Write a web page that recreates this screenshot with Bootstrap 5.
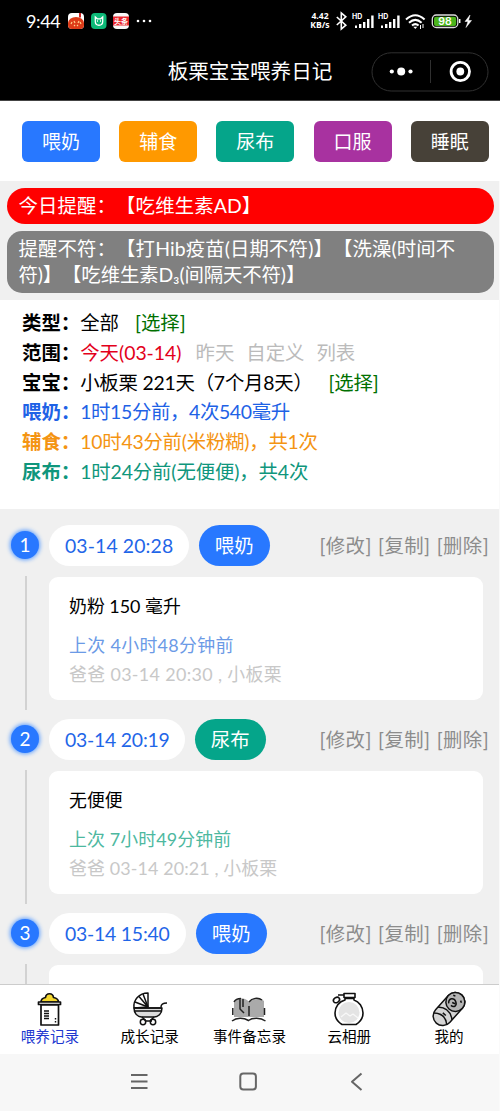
<!DOCTYPE html>
<html lang="zh-CN">
<head>
<meta charset="utf-8">
<meta name="viewport" content="width=device-width, initial-scale=1">
<title>板栗宝宝喂养日记</title>
<link href="https://cdn.jsdelivr.net/npm/bootstrap@5.3.0/dist/css/bootstrap.min.css" rel="stylesheet">
<style>
  :root { --blue:#2878ff; --orange:#ff9900; --green:#05a58a; --purple:#a832a0; --dark:#474138; }
  body { height:1112px; overflow:hidden; background:#fff; color:#000; font-family:Lato,"Noto Sans CJK SC",sans-serif; font-size:19.4px; line-height:1; text-spacing-trim:space-all; white-space:nowrap; font-weight:400; }
  svg { display:block; flex:none; }
  .status { height:42px; padding:0 26px 0 26px; }
  .clock { font-size:18px; width:42px; letter-spacing:-.4px; }
  .speed { font-family:"Open Sans",sans-serif; font-size:8.6px; line-height:9px; font-weight:700; width:24px; }
  .speed span { display:block; height:9px; }
  .topbar { height:59px; position:relative; border-bottom:1px solid #444; }
  .app-title { font-size:20.6px; }
  .capsule { position:absolute; right:11px; top:10px; }
  .inner { border-right:1px solid #fafafa; }
  .quick { height:80px; padding:20px 11px 0 22px; gap:19.2px; }
  .quick .btn { width:78px; height:41px; padding:0; border:0; border-radius:6px; color:#fff; font-size:19px; line-height:40px; }
  .c-blue { background:var(--blue); } .c-orange { background:var(--orange); } .c-green { background:var(--green); }
  .c-purple { background:var(--purple); } .c-dark { background:var(--dark); }
  .t-blue { color:#1e62e6; } .t-orange { color:#f49412; } .t-green { color:#0f967c; } .t-choose { color:#007000; } .t-red { color:#e3001b; } .t-mute { color:#bbb; }
  .notices { background:#f0f0f0; height:119px; padding:7px 5px 0 7px; gap:7.5px; }
  .notice { color:#fff; line-height:26px; padding:0 11.5px; letter-spacing:.13px; }
  .notice-red { background:#f00; height:35.5px; border-radius:18px; padding-top:5px; }
  .notice-gray { background:#808080; height:61.5px; border-radius:15px; padding-top:4.5px; }
  .tight-1 { letter-spacing:-.12px; } .tight-2 { letter-spacing:-.22px; } .tight-3 { letter-spacing:-.35px; }
  .loose-1 { letter-spacing:.12px; } .loose-2 { letter-spacing:.35px; }
  .info { height:209px; padding:8.3px 22px 0; }
  .info div { height:29.65px; line-height:29.65px; }
  .info b { font-weight:700; letter-spacing:0; }
  .feed { background:#f0f0f0; height:475px; overflow:hidden; padding:16px 10px 0 0; }
  .entry { height:194px; }
  .rail { width:49px; padding-left:1px; }
  .num { width:28px; height:28px; margin-top:6px; border-radius:50%; background:var(--blue); color:#fff; line-height:28px; font-size:19px; box-shadow:0 0 4px 1px #5b9dff; }
  .stem { width:2px; height:134px; margin:17px 0 0 1px; background:#d2d2d2; }
  .pill { height:41px; line-height:41px; border-radius:21px; }
  .when { background:#fff; color:#1f66e8; padding-left:16px; }
  .tag { width:70.5px; color:#fff; margin-left:10px; text-align:center; }
  .acts { color:#8c8c8c; line-height:41px; letter-spacing:.42px; word-spacing:.9px; }
  .note-card { width:434px; height:123px; margin-top:10.5px; border-radius:9px; background:#fff; padding:15.5px 20px 0; font-size:17.9px; }
  .note-card div { height:29px; line-height:29px; }
  .note-card .what { height:38.5px; }
  .note-card .who { color:#c8c8c8; }
  .tabs { height:70px; border-top:1px solid #ccc; padding-top:5px; font-size:14.6px; }
  .tabs a { width:100px; color:#000; text-decoration:none; line-height:18px; }
  .tabs a.on { color:#2037d0; }
  .sysbar { height:57px; background:#f7f7f7; }
</style>
</head>
<body class="d-flex flex-column">
<header class="bg-black text-white">
  <div class="status d-flex align-items-center">
    <span class="clock">9:44</span>
    <svg width="84" height="18" viewBox="0 0 84 18">
      <rect x="0" y="1" width="16" height="16" rx="4" fill="#fff"/><path d="M11 1h2v5l-1-1-1 1z" fill="#c22"/><path d="M0 11a8 6 0 0 1 16 0v2a4 4 0 0 1-4 4H4a4 4 0 0 1-4-4z" fill="#dd3b18"/><path d="M3 12l1-2M6 9l1 2M11 9l-1 2M13 12l-1-2M6 14l1-1M10 14l-1-1" stroke="#ffd08a" stroke-width="1.2"/>
      <rect x="23" y="1" width="15.500" height="16" rx="4" fill="#0cb977"/><path d="M27.300 5v4.500c0 5 7.400 5 7.400 0V5l-2 1.800h-3.400zM29 9h1M32 9h1" fill="none" stroke="#fff" stroke-width="1.300"/>
      <rect x="45" y="1" width="16" height="16" rx="4" fill="#f8f8f8"/><rect x="45" y="4.500" width="16" height="9" fill="#e9252c"/>
      <text x="53" y="12" text-anchor="middle" font-size="7" font-weight="700" fill="#fff" font-family="Noto Sans CJK SC">头条</text>
      <g fill="#fff"><circle cx="70" cy="9" r="1.300"/><circle cx="76" cy="9" r="1.300"/><circle cx="82" cy="9" r="1.300"/></g>
    </svg>
    <div class="speed ms-auto text-center"><span>4.42</span><span>KB/s</span></div>
    <svg class="ms-1" width="138" height="20" viewBox="0 0 138 20" fill="none" stroke="#fff">
      <path d="M.8 6l9 8.200L5.300 18V2l4.500 3.800L.8 14" stroke-width="1.600"/>
      <g id="sig" fill="#fff" stroke="none"><rect x="19" y="14.500" width="2" height="2.500"/><rect x="23" y="13" width="2.400" height="4"/><rect x="27" y="11" width="2.400" height="6"/><rect x="31" y="8" width="2.400" height="9"/><rect x="35.200" y="4.500" width="2.400" height="12.500"/><text x="16" y="8" font-size="7" font-weight="700" font-family="Inter">HD</text></g>
      <use href="#sig" x="26"/>
      <path d="M70 8.500q9.300-8.500 18.600 0M73 11.700q6.300-5.700 12.600 0M76 14.600q3.300-2.900 6.600 0" stroke-width="2"/><path d="M77.300 15.800h4l-2 2.200z" fill="#fff" stroke="none"/><path d="M84.500 14v4M87 13v4" stroke-width="1"/>
      <rect x="96.300" y="4" width="25.500" height="12.500" rx="4" stroke="#ddd" stroke-width="1.300"/><rect x="98" y="5.700" width="22.200" height="9.200" rx="2" fill="#4bb41c" stroke="none"/><path d="M123.700 8v4" stroke-width="1.500"/>
      <text x="109" y="14" text-anchor="middle" font-size="10.500" font-weight="600" fill="#fff" stroke="none" font-family="Inter">98</text>
      <path d="M134 4l-5 6.500h3l-2 6 5.500-7h-3z" fill="#fff" stroke-width=".5"/>
    </svg>
  </div>
  <div class="topbar d-flex align-items-center justify-content-center">
    <span class="app-title">板栗宝宝喂养日记</span>
    <svg class="capsule" width="118" height="40" viewBox="0 0 118 40">
      <rect x="1" y=".8" width="116" height="38.200" rx="19.100" fill="none" stroke="#303030"/><path d="M59.500 8v23" stroke="#303030"/>
      <g fill="#fff"><circle cx="20.800" cy="19.500" r="2.100"/><circle cx="30.200" cy="19.500" r="4"/><circle cx="39.500" cy="19.500" r="2.100"/><circle cx="89.300" cy="19.500" r="3.900"/></g><circle cx="89.300" cy="19.500" r="9.200" fill="none" stroke="#fff" stroke-width="2.800"/>
    </svg>
  </div>
</header>
<section class="quick d-flex">
  <button class="btn c-blue">喂奶</button><button class="btn c-orange">辅食</button><button class="btn c-green">尿布</button><button class="btn c-purple">口服</button><button class="btn c-dark">睡眠</button>
</section>
<div class="inner">
<section class="notices d-flex flex-column">
  <div class="notice notice-red">今日提醒：【吃维生素AD】</div>
  <div class="notice notice-gray">提醒不符：【打Hib疫苗(日期不符)】【洗澡(时间不<br><span class="tight-1">符)】【吃维生素D₃(间隔天不符)】</span></div>
</section>
<section class="info bg-white">
  <div><b>类型：</b>全部<span class="t-choose" style="margin-left:16px">[选择]</span></div>
  <div><b>范围：</b><span class="t-red">今天(03-14)</span><span class="t-mute"><span style="margin-left:14px">昨天</span><span class="ms-2 ps-1">自定义</span><span class="ms-2 ps-1">列表</span></span></div>
  <div class="tight-2"><b>宝宝：</b>小板栗 221天（7个月8天）<span class="t-choose ms-3">[选择]</span></div>
  <div class="t-blue tight-3"><b>喂奶：</b>1时15分前，4次540毫升</div>
  <div class="t-orange tight-2"><b>辅食：</b>10时43分前(米粉糊)，共1次</div>
  <div class="t-green tight-1"><b>尿布：</b>1时24分前(无便便)，共4次</div>
</section>
<main class="feed">
  <article class="entry d-flex">
    <div class="rail d-flex flex-column align-items-center"><span class="num text-center">1</span><i class="stem"></i></div>
    <div class="flex-grow-1">
      <div class="d-flex"><span class="pill when loose-1" style="width:140px">03-14 20:28</span><span class="pill tag c-blue">喂奶</span><span class="acts ms-auto">[修改] [复制] [删除]</span></div>
      <div class="note-card"><div class="what">奶粉 150 毫升</div><div class="loose-2" style="color:#6b9ae6">上次 4小时48分钟前</div><div class="who loose-2">爸爸 03-14 20:30 , 小板栗</div></div>
    </div>
  </article>
  <article class="entry d-flex">
    <div class="rail d-flex flex-column align-items-center"><span class="num text-center">2</span><i class="stem"></i></div>
    <div class="flex-grow-1">
      <div class="d-flex"><span class="pill when tight-2" style="width:136px">03-14 20:19</span><span class="pill tag c-green">尿布</span><span class="acts ms-auto">[修改] [复制] [删除]</span></div>
      <div class="note-card"><div class="what">无便便</div><div class="loose-1" style="color:#4db89f">上次 7小时49分钟前</div><div class="who loose-1">爸爸 03-14 20:21 , 小板栗</div></div>
    </div>
  </article>
  <article class="entry d-flex">
    <div class="rail d-flex flex-column align-items-center"><span class="num text-center">3</span><i class="stem"></i></div>
    <div class="flex-grow-1">
      <div class="d-flex"><span class="pill when tight-2" style="width:137px">03-14 15:40</span><span class="pill tag c-blue">喂奶</span><span class="acts ms-auto">[修改] [复制] [删除]</span></div>
      <div class="note-card"></div>
    </div>
  </article>
</main>
<nav class="tabs bg-white d-flex">
  <a class="on d-flex flex-column align-items-center" href="#">
    <svg width="36" height="38" viewBox="0 0 36 38" fill="none" stroke="#111" stroke-width="1.700" stroke-linejoin="round"><path d="M9 12c0-3 2-4 4.500-4.500C14 2.500 21 2.500 21.500 7.500 24 8 26.500 9 26.500 12z" fill="#f4d72f"/><path d="M6.500 12h22v2.500h-22z" fill="#fff"/><path d="M9 15h17.500v20H9z" fill="#fff"/><path d="M12 21h5M12 23.500h5M12 26h5M12 28.500h5M23.500 28v1.500M23.500 31v1.500" stroke-width="1.400"/></svg>喂养记录</a>
  <a class="d-flex flex-column align-items-center" href="#">
    <svg width="36" height="38" viewBox="0 0 36 38" fill="none" stroke="#111" stroke-width="1.500" stroke-linejoin="round"><path d="M2 18C1 10 7 3 16 3v14z" fill="#fff"/><path d="M16 17L3 12M16 17L7 6.500M16 17L11 4"/><path d="M2 18h28c0 6-4 9-8 9H10c-5 0-8-4-8-9z" fill="#ddd"/><path d="M2 18h28M3 21h26M29 17c0-3 2-4 6-4M10 27l4 4M22 27l-4 4M13 31h7"/><circle cx="11" cy="32" r="2.700"/><circle cx="21" cy="32" r="2.700"/></svg>成长记录</a>
  <a class="d-flex flex-column align-items-center" href="#">
    <svg width="36" height="38" viewBox="0 0 36 38" fill="none" stroke="#222" stroke-width="1.500"><path d="M3 12c4-5 11-5 15 0 4-5 11-5 15-1v16H3z" fill="#aaa" stroke="none"/><path d="M3 12c1-2 4-3.500 7-3.500M12 9v8M9 8v11l4 4M18 12c3-4 9-5 13-2M18 16v10M1.800 18v7M33.500 18v7M1 31c5-4 12-3 16.500-.5 4-3 12-3 17 .5"/></svg>事件备忘录</a>
  <a class="d-flex flex-column align-items-center" href="#">
    <svg width="36" height="38" viewBox="0 0 36 38" fill="none" stroke="#111" stroke-width="1.600" stroke-linejoin="round"><circle cx="18" cy="22.500" r="10.500" fill="#e4e4e4" stroke="none"/><path d="M14 8.500v1.500C8 11.500 4 17 4 23c0 5 3 9 7 11.500h14c4-2.500 7-6.500 7-11.500 0-6-4-11.500-9-13V8.500zM13 3.500h11v4H13zM13 5H7"/><ellipse cx="5.500" cy="10" rx="3.300" ry="2.500" transform="rotate(-35 5.500 10)"/><path d="M10 27l5-4 4 3 3-2 5 4" stroke="#f8f8f8" stroke-width="1.200"/></svg>云相册</a>
  <a class="d-flex flex-column align-items-center" href="#">
    <svg width="36" height="38" viewBox="0 0 36 38" fill="none" stroke="#111" stroke-width="1.500"><g transform="rotate(-48 18 19)"><rect x="-1" y="9.500" width="38" height="19" rx="9.500" fill="#d5d5d5"/><circle cx="27.500" cy="19" r="9.500" fill="#b5b5b5"/><path d="M22 15c4-4 8 0 6 4s-6 3-6-1M25 17l1 3"/><path d="M5 10.500c5 6 5 11.500 0 17M12 9.500c5 6 5 13 0 19"/><path d="M11 17v4M31 13l1 2M31 24l1-2"/></g></svg>我的</a>
</nav>
<footer class="sysbar">
  <svg width="499" height="57" viewBox="0 0 499 57" fill="none" stroke="#666" stroke-width="2"><path d="M131 21h16.500M131 27.500h16.500M131 34h16.500"/><rect x="240.300" y="19.500" width="15.600" height="16" rx="3"/><path d="M361.500 19.500l-9.500 8.300 9.500 8.300" stroke-linejoin="round"/></svg>
</footer>
</div>
<script src="https://cdn.jsdelivr.net/npm/bootstrap@5.3.0/dist/js/bootstrap.bundle.min.js"></script>
</body>
</html>
